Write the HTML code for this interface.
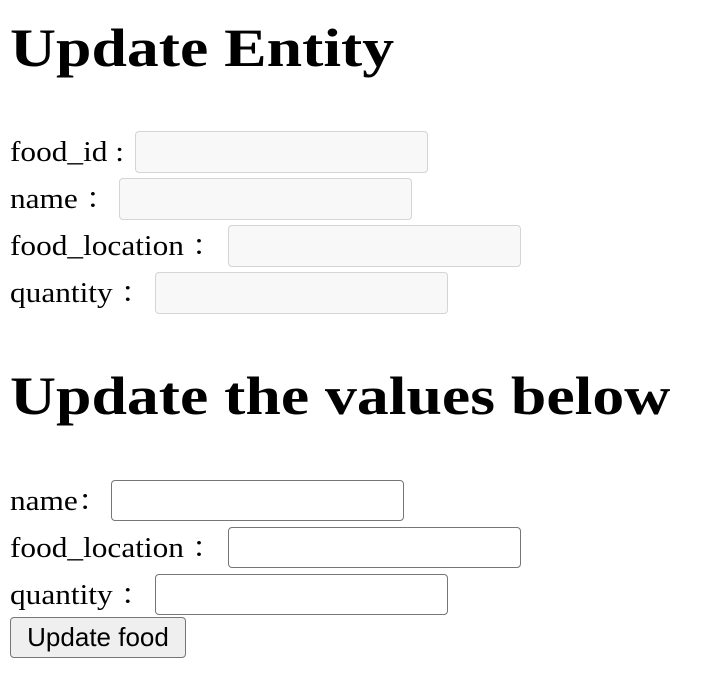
<!DOCTYPE html>
<html><head><meta charset="utf-8"><style>
body{margin:0;width:702px;height:694px;background:#fff;font-family:"Liberation Serif","Noto Serif CJK SC",serif;color:#000;position:relative;overflow:hidden}
h1{position:absolute;left:10px;margin:0;font-size:54px;font-weight:bold;line-height:54px;white-space:nowrap;transform:scaleX(1.18);transform-origin:0 0}
.l{position:absolute;left:10px;font-size:29px;line-height:42px;white-space:nowrap;transform:scaleX(1.08);transform-origin:0 0}
.i{position:absolute;width:291px;height:40px;border:1px solid #d4d4d4;background:#f8f8f8;border-radius:4px}
.j{position:absolute;width:291px;height:39px;border:1.5px solid #767676;background:#fff;border-radius:4px}
.b{position:absolute;left:10px;top:617px;width:174px;height:39px;border:1.5px solid #767676;background:#efefef;border-radius:4px;font-family:"Liberation Sans",sans-serif;font-size:26px;line-height:39px;text-align:center}
</style></head><body>
<h1 style="top:21px">Update Entity</h1>
<div class="l" style="top:131px">food_id :</div><div class="i" style="left:135px;top:131px"></div>
<div class="l" style="top:178px">name ：</div><div class="i" style="left:119px;top:178px"></div>
<div class="l" style="top:225px">food_location ：</div><div class="i" style="left:228px;top:225px"></div>
<div class="l" style="top:272px">quantity ：</div><div class="i" style="left:155px;top:272px"></div>
<h1 style="top:369px">Update the values below</h1>
<div class="l" style="top:480px">name：</div><div class="j" style="left:111px;top:480px"></div>
<div class="l" style="top:527px">food_location ：</div><div class="j" style="left:228px;top:527px"></div>
<div class="l" style="top:574px">quantity ：</div><div class="j" style="left:155px;top:574px"></div>
<div class="b">Update food</div>
</body></html>
